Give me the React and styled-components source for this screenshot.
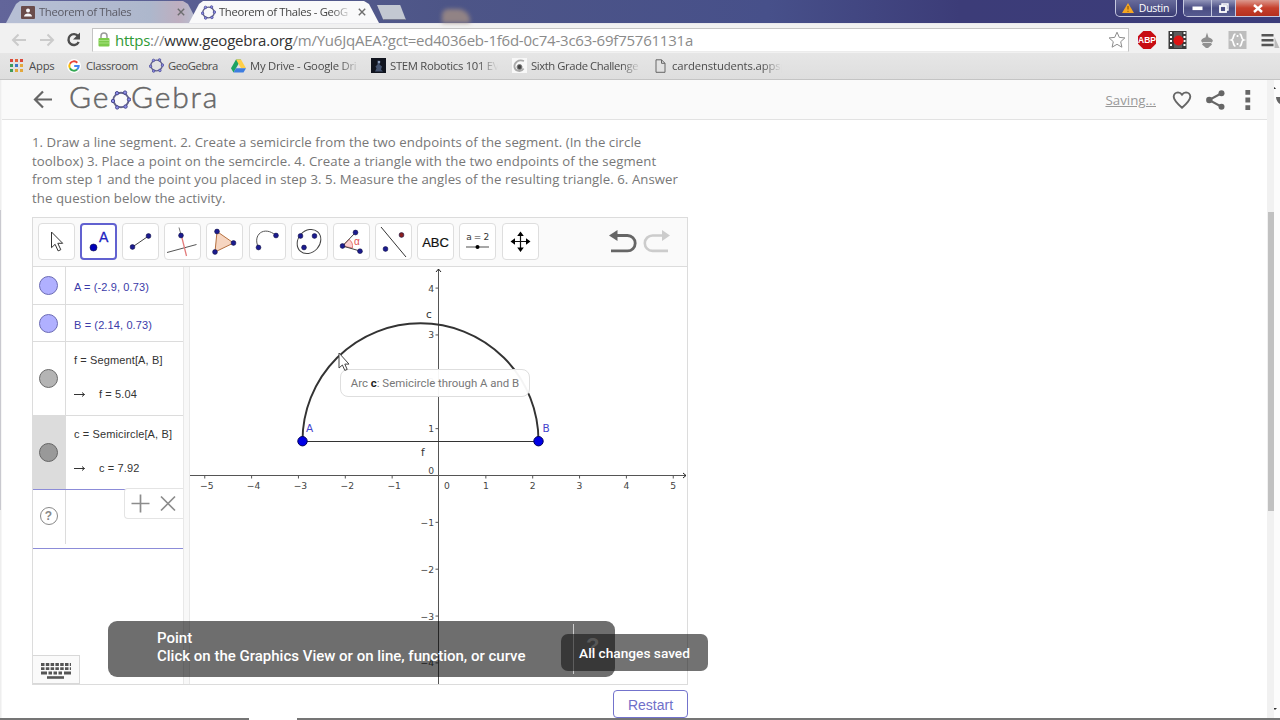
import React from "react";
import styled, { createGlobalStyle } from "styled-components";

const tools = [
  "move",
  "point",
  "segment",
  "perpendicular",
  "polygon",
  "arc",
  "conic",
  "angle",
  "reflect",
  "text",
  "slider",
  "pan",
];

const bookmarks = [
  { icon: "apps", label: "Apps", width: 57, spacing: -0.2 },
  { icon: "google", label: "Classroom", width: 82, spacing: -0.42 },
  { icon: "hexagon", label: "GeoGebra", width: 82, spacing: -0.5 },
  { icon: "drive", label: "My Drive - Google Dri", width: 140, fade: 110, spacing: -0.25 },
  { icon: "stem", label: "STEM Robotics 101 EV", width: 141, fade: 108, spacing: -0.3 },
  { icon: "swirl", label: "Sixth Grade Challenge", width: 141, fade: 110, spacing: -0.42 },
  { icon: "file", label: "cardenstudents.appsp", width: 141, fade: 110, spacing: -0.12 },
];

function App() {
  return (
    <>
      <GlobalStyle />
      <Browser>
        <TabStrip>
          <Tab $width={192} $inactive>
            <TabIcon>
              <SmallIcon name="person" />
            </TabIcon>
            <TabTitle>Theorem of Thales</TabTitle>
            <TabClose />
          </Tab>
          <Tab $width={190} $overlap>
            <TabIcon>
              <SmallIcon name="hexagon" />
            </TabIcon>
            <TabTitle $fade>Theorem of Thales - GeoG</TabTitle>
            <TabClose />
          </Tab>
          <NewTab />
          <Glow />
          <WindowButtons>
            <UserButton>
              <svg width="12" height="10" viewBox="0 0 12 10">
                <path d="M6 0L12 10H0Z" fill="#f5a623" />
                <path d="M6 3v3.5M6 7.8v1" stroke="#7a4b00" />
              </svg>
              Dustin
            </UserButton>
            <WindowGroup>
              <WindowButton $width={28}>
                <svg width="11" height="5">
                  <rect x=".5" y=".5" width="10" height="3.6" fill="#fff" />
                </svg>
              </WindowButton>
              <WindowButton $width={24}>
                <svg width="10" height="10" fill="none" stroke="#fff">
                  <path d="M3 2.5V1h6v6H7.5" strokeWidth="1.4" />
                  <rect x="1" y="3" width="6" height="6" strokeWidth="1.8" />
                </svg>
              </WindowButton>
              <WindowButton $width={44} $danger>
                <svg width="10" height="9">
                  <path d="M1 1l8 7M9 1L1 8" stroke="#fff" strokeWidth="2.4" />
                </svg>
              </WindowButton>
            </WindowGroup>
          </WindowButtons>
        </TabStrip>

        <AddressBar>
          <NavIcons width="80" height="24" viewBox="0 0 80 24" fill="none">
            <path
              d="M15 12H2M7.5 6.5l-5.5 5.5 5.5 5.5M29 12h13M36.5 6.5l5.5 5.5-5.5 5.5"
              stroke="#cbcbcb"
              strokeWidth="2"
            />
            <path
              d="M67.2 8.3A5.4 5.4 0 1 0 67.7 14"
              stroke="#4d4d4d"
              strokeWidth="2.4"
            />
            <path d="M69 4.5v7h-7z" fill="#4d4d4d" />
          </NavIcons>
          <UrlBox>
            <svg width="12" height="15" viewBox="0 0 12 15">
              <path
                d="M3 7V4a3 3 0 0 1 6 0v3"
                fill="none"
                stroke="#9a9a9a"
                strokeWidth="1.5"
              />
              <rect x=".5" y="6" width="11" height="8.5" rx="1" fill="#7ccb4b" />
              <path d="M1 8.5h10M1 11h10" stroke="#a5e07e" />
            </svg>
            <Url>
              <Secure>https</Secure>://<Host>www.geogebra.org</Host>
              /m/Yu6JqAEA?gct=ed4036eb-1f6d-0c74-3c63-69f75761131a
            </Url>
            <svg width="18" height="18" viewBox="0 0 18 18">
              <path
                d="M9 1.2l2.3 5.2 5.6.5-4.2 3.8 1.2 5.5L9 13.3l-4.9 2.9 1.2-5.5L1.1 6.9l5.6-.5z"
                fill="#fff"
                stroke="#8c8c8c"
              />
            </svg>
          </UrlBox>
          <Extensions />
        </AddressBar>

        <BookmarkBar>
          {bookmarks.map((item) => (
            <Bookmark key={item.label} $width={item.width}>
              <BookmarkIcon $narrow={item.icon === "file"}>
                <SmallIcon name={item.icon} />
              </BookmarkIcon>
              <BookmarkLabel $fade={item.fade} $spacing={item.spacing}>
                {item.label}
              </BookmarkLabel>
            </Bookmark>
          ))}
        </BookmarkBar>

        <Viewport>
          <WindowEdge />
          <Page>
            <SiteHeader>
              <svg width="20" height="20" viewBox="0 0 20 20" fill="none">
                <path
                  d="M19 9.5H2.5M10 1.5l-8 8 8 8"
                  stroke="#666"
                  strokeWidth="2.2"
                />
              </svg>
              <Logo>
                <span>Ge</span>
                <HexMark size={20} />
                <span>Gebra</span>
              </Logo>
              <Saving>Saving...</Saving>
              <HeaderIcons />
            </SiteHeader>
            <Content>
              <Instructions>
                <Line $spacing={0.055}>
                  1. Draw a line segment. 2. Create a semicircle from the two
                  endpoints of the segment. (In the circle
                </Line>
                <Line $spacing={0.085}>
                  toolbox) 3. Place a point on the semcircle. 4. Create a
                  triangle with the two endpoints of the segment
                </Line>
                <Line $spacing={0.075}>
                  from step 1 and the point you placed in step 3. 5. Measure the
                  angles of the resulting triangle. 6. Answer
                </Line>
                <Line $spacing={0.07}>the question below the activity.</Line>
              </Instructions>
              <Applet>
                <Toolbar>
                  {tools.map((name) => (
                    <ToolButton key={name} $active={name === "point"}>
                      <ToolIcon name={name} />
                    </ToolButton>
                  ))}
                  <UndoRedo width="64" height="26" viewBox="0 0 64 26" fill="none">
                    <path
                      d="M8 6.5h11.5a7.5 7.5 0 0 1 0 15.4H3"
                      stroke="#666"
                      strokeWidth="2.8"
                    />
                    <path d="M1 6.5L9.5 1v11z" fill="#666" />
                    <path
                      d="M55 6.5H44.5a7.5 7.5 0 0 0 0 15.4H60"
                      stroke="#ccc"
                      strokeWidth="2.6"
                    />
                    <path d="M62 6.5L54 1v11z" fill="#ccc" />
                  </UndoRedo>
                </Toolbar>
                <Views>
                  <Algebra>
                    <AlgebraRow $height={38}>
                      <Marble $fill="#b0b0ff" $line="#6b6bb5" />
                      <Definition $color="#3b3ba8" $single>
                        <Expr>A = (-2.9, 0.73)</Expr>
                      </Definition>
                    </AlgebraRow>
                    <AlgebraRow $height={37}>
                      <Marble $fill="#b0b0ff" $line="#6b6bb5" />
                      <Definition $color="#3b3ba8" $single>
                        <Expr>B = (2.14, 0.73)</Expr>
                      </Definition>
                    </AlgebraRow>
                    <AlgebraRow $height={74}>
                      <Marble $fill="#b4b4b4" $line="#6a6a6a" />
                      <Definition $color="#333">
                        <Expr>f = Segment[A, B]</Expr>
                        <Result>
                          <Arrow />f = 5.04
                        </Result>
                      </Definition>
                    </AlgebraRow>
                    <AlgebraRow $height={74} $focus>
                      <Marble $fill="#999" $line="#666" $selected />
                      <Definition $color="#333">
                        <Expr>c = Semicircle[A, B]</Expr>
                        <Result>
                          <Arrow />c = 7.92
                        </Result>
                      </Definition>
                    </AlgebraRow>
                    <InputRow>
                      <HelpCell>
                        <Help>?</Help>
                      </HelpCell>
                      <InputActions>
                        <svg width="46" height="20" viewBox="0 0 46 20">
                          <path
                            d="M9.5 .5v18M.5 9.5h18M30 2.5l14 14M44 2.5L30 16.5"
                            stroke="#8c8c8c"
                            strokeWidth="1.7"
                          />
                        </svg>
                      </InputActions>
                    </InputRow>
                    <KeyboardButton>
                      <Keyboard />
                    </KeyboardButton>
                  </Algebra>
                  <Splitter />
                  <Graphics />
                </Views>
                <Tooltip>
                  Arc <b>c</b>: Semicircle through A and B
                </Tooltip>
                <Pointer width="12" height="20" viewBox="0 0 12 20">
                  <path
                    d="M1 1v15l3.4-3 2.4 5.4 2.4-1-2.4-5.3H11z"
                    fill="#fff"
                    stroke="#444"
                  />
                </Pointer>
                <Snackbar>
                  <SnackText>
                    <p>Point</p>
                    <p>Click on the Graphics View or on line, function, or curve</p>
                  </SnackText>
                  <SnackHelp>?</SnackHelp>
                </Snackbar>
                <Toast>All changes saved</Toast>
              </Applet>
              <Restart>Restart</Restart>
            </Content>
          </Page>
          <ScrollTrack>
            <ScrollThumb />
          </ScrollTrack>
          <ScrollGutter>
            <svg width="6" height="638" viewBox="0 0 6 638">
              <path d="M-1 9l1.5-2L2 9zM-1 628h4l-2 2z" fill="#333" />
              <path d="M2 17h4v7c-2-1-4-4-4-7z" fill="#666" />
            </svg>
          </ScrollGutter>
        </Viewport>
        <Taskbar>
          <TaskbarGap />
        </Taskbar>
      </Browser>
    </>
  );
}

export default App;

function HexMark({ size }) {
  const dots = [
    [6, 3.2],
    [14, 2.6],
    [18, 9.5],
    [14.5, 16.6],
    [6.2, 17.4],
    [2, 11],
  ];
  return (
    <svg width={size} height={size} viewBox="0 0 20 20">
      <ellipse
        cx="10"
        cy="10"
        rx="7.6"
        ry="7.2"
        fill="none"
        stroke="#62628a"
        strokeWidth="1.9"
      />
      {dots.map(([x, y]) => (
        <circle key={x} cx={x} cy={y} r="1.7" fill="#8f8fe8" stroke="#4a4a90" />
      ))}
    </svg>
  );
}

function SmallIcon({ name }) {
  if (name === "hexagon") return <HexMark size={15} />;
  if (name === "apps") {
    const colors = ["#d9483b", "#e0643c", "#d9483b", "#3f9b5a", "#3d77c9", "#e3a83b", "#3f9b5a", "#e3a83b", "#e3a83b"];
    return (
      <svg width="14" height="14">
        {colors.map((c, i) => (
          <rect
            key={i}
            x={(i % 3) * 5}
            y={Math.floor(i / 3) * 5}
            width="3"
            height="3"
            fill={c}
          />
        ))}
      </svg>
    );
  }
  if (name === "google") {
    return (
      <svg width="14" height="14" viewBox="0 0 14 14" fill="none">
        <circle cx="7" cy="7" r="7" fill="#fff" />
        <g strokeWidth="2">
          <path d="M10.3 3.7A4.7 4.7 0 0 0 2.9 4.7" stroke="#e94235" />
          <path d="M2.9 4.7a4.7 4.7 0 0 0 0 4.6" stroke="#fabb05" />
          <path d="M2.9 9.3a4.7 4.7 0 0 0 7.2 1.2" stroke="#34a853" />
          <path d="M10.1 10.5A4.7 4.7 0 0 0 11.7 7H7.2" stroke="#4285f4" />
        </g>
      </svg>
    );
  }
  if (name === "drive") {
    return (
      <svg width="15" height="14" viewBox="0 0 15 14">
        <path d="M5 .5h5L5 9.2 2.5 13.5 0 9.2z" fill="#1da362" />
        <path d="M5 .5h5l5 8.7h-5z" fill="#ffcf48" />
        <path d="M5 9.2h10l-2.5 4.3h-10z" fill="#3d7de0" />
      </svg>
    );
  }
  if (name === "stem") {
    return (
      <svg width="15" height="15">
        <rect width="15" height="15" fill="#11151f" />
        <path d="M6.5 2.5l3 1-1 3 2.5 2-1 3 2 2H4l1.5-3-1-2 2-2z" fill="#44536f" />
        <circle cx="8" cy="4" r="1.2" fill="#8fa0bd" />
      </svg>
    );
  }
  if (name === "swirl") {
    return (
      <svg width="15" height="15" fill="none">
        <rect width="15" height="15" fill="#f8f8f8" />
        <path d="M12 3C6 1 2 5 2.4 9a5 5 0 0 0 9.2 1.5" stroke="#aaa" strokeWidth="1.8" />
        <circle cx="7.5" cy="9" r="2.5" fill="#444" stroke="#888" />
      </svg>
    );
  }
  if (name === "file") {
    return (
      <svg width="11" height="14" fill="none" stroke="#666">
        <path d="M1 .8h5.5L10 4.3v9H1zM6.5.8v3.5H10" />
      </svg>
    );
  }
  return (
    <svg width="14" height="13">
      <rect width="14" height="13" rx="1" fill="#6b4b47" />
      <circle cx="7" cy="4.6" r="2" fill="#fff" />
      <path d="M3 10.5c0-4 8-4 8 0z" fill="#fff" />
    </svg>
  );
}

function TabClose() {
  return (
    <CloseIcon width="8" height="8" viewBox="0 0 8 8">
      <path d="M.8.8l6.4 6.4M7.2.8L.8 7.2" stroke="#6e6e6e" strokeWidth="1.4" />
    </CloseIcon>
  );
}

function Extensions() {
  return (
    <ExtensionIcons width="149" height="24" viewBox="0 0 149 24">
      <path d="M12.3 3h7.4l5.3 5.3v7.4L19.7 21h-7.4L7 15.7V8.3z" fill="#c70d12" />
      <AbpText x="16" y="15.3">
        ABP
      </AbpText>
      <rect x="37.5" y="3" width="18" height="18" fill="#3a3a3a" />
      <path d="M40 4v16M53.5 4v16" stroke="#fff" strokeWidth="2" strokeDasharray="2 2" />
      <rect x="43" y="4" width="8" height="16" fill="#5b5b5b" />
      <circle cx="47.5" cy="12.5" r="5" fill="#dd1414" />
      <path
        d="M76 4.500l1.500 5h-3zM70 13c1.500-5 10.500-5 12 0l-2 2 1 1.500-4 3.500h-2l-4-3.500 1-1.500z"
        fill="#909090"
      />
      <path d="M72 14.500h8" stroke="#ddd" />
      <rect x="97.5" y="3" width="18" height="18" fill="#bdbdbd" />
      <path
        d="M104.500 6c-3 0-1 5-4 6 3 1 1 6 4 6M108.500 6c3 0 1 5 4 6-3 1-1 6-4 6M106.500 7v2M106.500 15v2"
        stroke="#fff"
        strokeWidth="1.7"
        fill="none"
      />
      <path d="M130.500 7.300h12M130.500 12.200h12M130.500 17h12" stroke="#555" strokeWidth="2.5" />
      <path d="M143.500 9l5 11h-5z" fill="#bbb" />
    </ExtensionIcons>
  );
}

function HeaderIcons() {
  return (
    <svg width="84" height="24" viewBox="0 0 84 24" fill="none">
      <path
        d="M11 19.8C5 14.5 2.7 12 2.7 8.8A4.500 4.500 0 0 1 7 4.400c1.600 0 3 .8 4 2.200 1-1.400 2.400-2.200 4-2.200a4.500 4.500 0 0 1 4.300 4.400c0 3.200-2.300 5.700-8.300 11z"
        stroke="#666"
        strokeWidth="1.9"
      />
      <path d="M51 5L38 12l13 7" stroke="#666" strokeWidth="2" />
      <circle cx="50.5" cy="5.2" r="3" fill="#666" />
      <circle cx="38.3" cy="12" r="3.2" fill="#666" />
      <circle cx="50.5" cy="18.8" r="3" fill="#666" />
      <path d="M74.4 2h4.8v4.8h-4.8zM74.4 9.6h4.8v4.8h-4.8zM74.4 17.2h4.8V22h-4.8z" fill="#666" />
    </svg>
  );
}

function ToolIcon({ name }) {
  const dot = (x, y, r = 2.4, fill = "#1b1b8f") => (
    <circle cx={x} cy={y} r={r} fill={fill} stroke="#111144" strokeWidth=".6" />
  );
  const shapes = {
    move: (
      <path
        d="M13.5 9v15.7l3.6-3.4 3 6.6 2.7-1.2-3-6.4h4.9z"
        fill="#fff"
        stroke="#333"
      />
    ),
    point: (
      <>
        {dot(13.5, 24.5, 3.5, "#0000b8")}
        <BigA x="19" y="19">
          A
        </BigA>
      </>
    ),
    segment: (
      <>
        <path d="M10.5 24L26.5 13" stroke="#444" />
        {dot(10.5, 24)}
        {dot(26.5, 13)}
      </>
    ),
    perpendicular: (
      <>
        <path d="M3 29.5L32.5 21.5" stroke="#555" />
        <path d="M15 4.5l2.5 9" stroke="#777" />
        <path d="M17.5 13l5 20" stroke="#e37c7c" strokeWidth="1.3" />
        {dot(17, 12.5)}
      </>
    ),
    polygon: (
      <>
        <path d="M11 8.5L27.5 20 9 29z" fill="#f6d5c0" stroke="#b5703f" />
        {dot(11, 8.5)}
        {dot(27.5, 20)}
        {dot(9, 29)}
      </>
    ),
    arc: (
      <>
        <path d="M9.5 24.5C3 12 15 2 27 12.5" fill="none" stroke="#555" />
        {dot(9.5, 24.5)}
        {dot(27, 12.5)}
      </>
    ),
    conic: (
      <>
        <ellipse
          cx="18"
          cy="18.5"
          rx="13"
          ry="10.8"
          transform="rotate(-48 18 18.5)"
          fill="none"
          stroke="#444"
        />
        {dot(9.5, 13)}
        {dot(23.5, 13)}
        {dot(13, 24.5)}
      </>
    ),
    angle: (
      <>
        <path d="M9.5 23l6.5-6.6c3 2 4 5 3.4 8.6z" fill="#fbd0d0" stroke="#e27a7a" />
        <path d="M22.5 9.5L9.5 23l17.5 5" fill="none" stroke="#444" />
        {dot(22.5, 9.5)}
        {dot(9.5, 23)}
        {dot(27, 28.2)}
        <Alpha x="21" y="22">
          α
        </Alpha>
      </>
    ),
    reflect: (
      <>
        <path d="M6 4l25 30" stroke="#333" />
        {dot(10.5, 26)}
        {dot(26.5, 12, 2.4, "#8a1f1f")}
      </>
    ),
    text: (
      <AbcText x="18.5" y="23.5">
        ABC
      </AbcText>
    ),
    slider: (
      <>
        <SliderText x="18.5" y="17">
          a = 2
        </SliderText>
        <path d="M7 24h23" stroke="#777" strokeWidth="1.3" />
        <circle cx="18.5" cy="24" r="2" fill="#000" />
      </>
    ),
    pan: (
      <>
        <path d="M18.5 12v14M12 18.5h14" stroke="#111" strokeWidth="1.2" />
        <path
          d="M18.5 8.5l3.3 4.5h-6.6zM18.5 29l3.3-4.5h-6.6zM8.5 18.5l4.5-3.3v6.6zM28.5 18.5l-4.500-3.300v6.600z"
          fill="#000"
        />
      </>
    ),
  };
  return (
    <svg width="37" height="37" viewBox="0 0 37 37">
      {shapes[name]}
    </svg>
  );
}

function Arrow() {
  return (
    <svg width="12" height="7" viewBox="0 0 12 7" fill="none" stroke="#333">
      <path d="M0 3.5h10.5M8 1.5l2.5 2L8 5.5" />
    </svg>
  );
}

function Keyboard() {
  return (
    <svg width="30" height="18" viewBox="0 0 30 18" stroke="#555">
      <path d="M0 2.5h30M0 6.7h30" strokeWidth="2.8" strokeDasharray="3.5 1.3" />
      <path d="M0 11h6M7.5 11h3.5M12.5 11h3.5M17.5 11h3.5M23 11h7" strokeWidth="2.8" />
      <path d="M6 15.5h17" strokeWidth="2.6" />
    </svg>
  );
}

const UNIT = 46.85;
const OX = 249;
const OY = 208.5;

function Graphics() {
  const xs = [-5, -4, -3, -2, -1, 1, 2, 3, 4, 5];
  const ys = [4, 3, 2, 1, -1, -2, -3, -4];
  const format = (n) => String(n).replace("-", "−");
  return (
    <Plane width="497" height="417" viewBox="0 0 497 417">
      <g stroke="#555" fill="none">
        <path d={`M0 ${OY}H496M${OX - 0.5} 2V417`} />
        <path d={`M493 ${OY - 2.5}l3 2.5-3 2.5M${OX - 3} 5l2.5-3 2.5 3`} stroke="#222" />
        {xs.map((n) => (
          <path key={n} d={`M${OX + n * UNIT} ${OY}v3`} />
        ))}
        {ys.map((n) => (
          <path key={n} d={`M${OX - 0.5} ${OY - n * UNIT}h-3`} />
        ))}
      </g>
      {xs.map((n) => (
        <AxisLabel key={n} x={OX + n * UNIT + (n < 0 ? 2 : 0)} y="221.5">
          {format(n)}
        </AxisLabel>
      ))}
      <AxisLabel x="257" y="221.5">
        0
      </AxisLabel>
      {ys.map((n) => (
        <AxisLabel key={n} x="244" y={OY + 3.5 - n * UNIT} $end>
          {format(n)}
        </AxisLabel>
      ))}
      <AxisLabel x="244" y="206.5" $end>
        0
      </AxisLabel>
      <path d="M112.5 174.5h236" stroke="#333" strokeWidth="1.2" />
      <path d="M112.5 174a118 117.7 0 0 1 236 0" fill="none" stroke="#333" strokeWidth="1.9" />
      <circle cx="112.5" cy="174.2" r="4.7" fill="#0000e6" stroke="#00005c" />
      <circle cx="348.5" cy="174.2" r="4.7" fill="#0000e6" stroke="#00005c" />
      <PointLabel x="116" y="165">
        A
      </PointLabel>
      <PointLabel x="352.5" y="165">
        B
      </PointLabel>
      <ShapeLabel x="236" y="51">
        c
      </ShapeLabel>
      <ShapeLabel x="231" y="189">
        f
      </ShapeLabel>
    </Plane>
  );
}

const GlobalStyle = createGlobalStyle`
  * {
    box-sizing: border-box;
  }
  body {
    margin: 0;
    background: #fff;
    font-family: "Open Sans", "Noto Sans", sans-serif;
  }
  p {
    margin: 0;
  }
  svg {
    display: block;
    flex-shrink: 0;
  }
`;

const Browser = styled.div`
  width: 1280px;
  height: 720px;
  display: flex;
  flex-direction: column;
  overflow: hidden;
`;

const TabStrip = styled.header`
  height: 24px;
  display: flex;
  align-items: flex-end;
  padding-left: 6px;
  background: linear-gradient(90deg, #62659a, #4d5587 35%, #47508a 60%, #3c3c78 75%, #3b3c7a);
  border-bottom: 1px solid #e8e8ec;
`;

const Tab = styled.div`
  width: ${(p) => p.$width}px;
  height: 22px;
  display: flex;
  align-items: center;
  padding: 0 13px 0 ${(p) => (p.$overlap ? "12px" : "15px")};
  margin-left: ${(p) => (p.$overlap ? "-9px" : "0")};
  background: ${(p) =>
    p.$inactive ? "linear-gradient(90deg, #bcc5d8, #b3bccf 75%, #c4b3c2 90%, #bcc5d8)" : "#f9f9fa"};
  clip-path: polygon(0 100%, 10px 3px, 14px 0, calc(100% - 15px) 0, calc(100% - 10px) 3px, 100% 100%);
  opacity: ${(p) => (p.$inactive ? 0.95 : 1)};
`;

const TabIcon = styled.span`
  width: 15px;
  margin-right: 3px;
`;

const TabTitle = styled.span`
  flex: 1;
  min-width: 0;
  overflow: hidden;
  white-space: nowrap;
  font-size: 11.3px;
  line-height: 16px;
  letter-spacing: -0.35px;
  color: ${(p) => (p.$fade ? "#444" : "#5a5a62")};
  mask-image: ${(p) =>
    p.$fade ? "linear-gradient(90deg, #000 112px, transparent 133px)" : "none"};
`;

const CloseIcon = styled.svg`
  margin-left: 8px;
`;

const NewTab = styled.div`
  width: 29px;
  height: 15px;
  margin: 0 0 3px -2px;
  background: #c3c8d2;
  border-bottom: 1px solid #777a90;
  clip-path: polygon(0 0, 80% 0, 100% 100%, 22% 100%);
`;

const Glow = styled.div`
  width: 28px;
  height: 14px;
  margin-left: 36px;
  border-radius: 6px 12px 0 0;
  background: #a38f85;
  filter: blur(2px);
  opacity: 0.8;
`;

const WindowButtons = styled.div`
  display: flex;
  align-self: flex-start;
  gap: 6px;
  margin-left: auto;
`;

const UserButton = styled.div`
  width: 62px;
  height: 17px;
  display: flex;
  align-items: center;
  justify-content: center;
  gap: 5px;
  padding: 0 1px 1px 0;
  border: 1px solid #c6c9e0;
  border-top: 0;
  border-radius: 0 0 5px 5px;
  background: linear-gradient(#686b9b, #3a3c74);
  color: #fff;
  font-size: 10.5px;
  line-height: 14px;
  letter-spacing: -0.25px;
`;

const WindowGroup = styled.div`
  display: flex;
  height: 17px;
  overflow: hidden;
  border: 1px solid #c6c9e0;
  border-top: 0;
  border-right: 0;
  border-radius: 0 0 0 5px;
`;

const WindowButton = styled.div`
  width: ${(p) => p.$width}px;
  display: flex;
  align-items: center;
  justify-content: center;
  border-right: 1px solid #c6c9e0;
  background: ${(p) =>
    p.$danger
      ? "linear-gradient(#dc9a8f, #c6402c 50%, #b5301f)"
      : "linear-gradient(#9295ba, #4a4d83 50%, #565a90)"};
`;

const AddressBar = styled.div`
  height: 29px;
  display: flex;
  align-items: center;
  padding: 3px 0 0 11px;
  background: #f1f1f1;
`;

const NavIcons = styled.svg`
  margin-right: 1px;
`;

const UrlBox = styled.div`
  width: 1038px;
  height: 24px;
  display: flex;
  align-items: center;
  padding: 0 2px 1px 5px;
  background: #fff;
  border: 1px solid #c4c4c4;
  border-bottom-color: #ececec;
`;

const Url = styled.span`
  flex: 1;
  margin-left: 5px;
  white-space: nowrap;
  font-size: 15px;
  line-height: 20px;
  letter-spacing: -0.23px;
  color: #8b8b8b;
`;

const Secure = styled.span`
  color: #2f9a35;
`;

const Host = styled.span`
  color: #333;
`;

const ExtensionIcons = styled.svg`
  margin-left: 2px;
`;

const AbpText = styled.text`
  font: bold 8.5px "Liberation Sans", sans-serif;
  fill: #fff;
  text-anchor: middle;
`;

const BookmarkBar = styled.nav`
  height: 27px;
  display: flex;
  align-items: center;
  padding: 0 0 1px 10px;
  background: linear-gradient(#e6e6e6, #dedede);
  border-bottom: 1px solid #c4c4c4;
`;

const Bookmark = styled.div`
  width: ${(p) => p.$width}px;
  display: flex;
  align-items: center;
  gap: 4px;
`;

const BookmarkIcon = styled.span`
  width: 15px;
  padding-left: ${(p) => (p.$narrow ? "2px" : "0")};
`;

const BookmarkLabel = styled.span`
  width: ${(p) => (p.$fade ? `${p.$fade}px` : "auto")};
  overflow: hidden;
  white-space: nowrap;
  font-size: 11.3px;
  line-height: 16px;
  letter-spacing: ${(p) => p.$spacing}px;
  color: #4c4c4c;
  mask-image: ${(p) =>
    p.$fade ? "linear-gradient(90deg, #000 82%, transparent)" : "none"};
`;

const Viewport = styled.div`
  height: 638px;
  display: flex;
`;

const WindowEdge = styled.div`
  width: 2px;
  background: linear-gradient(#eee 0 130px, #c9c9cf 130px 430px, #eee 430px);
  border-right: 1px solid #f6f6f6;
`;

const Page = styled.main`
  flex: 1;
  display: flex;
  flex-direction: column;
  background: #fff;
`;

const SiteHeader = styled.div`
  height: 40px;
  display: flex;
  align-items: center;
  padding: 0 12px 0 31px;
  background: #fafafa;
  border-bottom: 1px solid #e2e2e2;
`;

const Logo = styled.div`
  display: flex;
  align-items: center;
  margin: -7px 0 0 16px;
  font: 300 30px/34px Lato, sans-serif;
  letter-spacing: 1.8px;
  color: #666;
  -webkit-text-stroke: 0.5px #666;

  svg {
    margin: 7px 0 0 1px;
  }
`;

const Saving = styled.span`
  margin: 0 15px 0 auto;
  font-size: 13.3px;
  line-height: 18px;
  color: #999;
  text-decoration: underline;
`;

const Content = styled.section`
  width: 656px;
  display: flex;
  flex-direction: column;
  margin-left: 30px;
`;

const Instructions = styled.div`
  padding-top: 13px;
  height: 97px;
`;

const Line = styled.p`
  white-space: nowrap;
  font-size: 13.2px;
  line-height: 18.7px;
  letter-spacing: ${(p) => p.$spacing}px;
  color: #777;
`;

const Applet = styled.div`
  position: relative;
  height: 468px;
  border: 1px solid #dcdcdc;
`;

const Toolbar = styled.div`
  height: 49px;
  display: flex;
  align-items: center;
  gap: 5.2px;
  padding: 0 0 1px 4.6px;
  background: #fafafa;
  border-bottom: 1px solid #dcdcdc;
`;

const ToolButton = styled.div`
  width: 37px;
  height: 37px;
  display: flex;
  align-items: center;
  justify-content: center;
  background: #fff;
  border: ${(p) => (p.$active ? "2px solid #6161d0" : "1px solid #dedede")};
  border-radius: 4px;
`;

const UndoRedo = styled.svg`
  margin-left: 64.5px;
`;

const BigA = styled.text`
  font: 14px "Liberation Sans", sans-serif;
  fill: #2020c0;
  stroke: #2020c0;
  stroke-width: 0.3px;
`;

const Alpha = styled.text`
  font: 10px "Liberation Sans", sans-serif;
  fill: #e05050;
`;

const AbcText = styled.text`
  font: 13px "Liberation Sans", sans-serif;
  fill: #111;
  stroke: #111;
  stroke-width: 0.2px;
  text-anchor: middle;
`;

const SliderText = styled.text`
  font: 9px "DejaVu Sans", sans-serif;
  letter-spacing: -0.4px;
  fill: #333;
  text-anchor: middle;
`;

const Views = styled.div`
  height: 417px;
  display: flex;
`;

const Algebra = styled.div`
  width: 150px;
  display: flex;
  flex-direction: column;
`;

const AlgebraRow = styled.div`
  height: ${(p) => p.$height}px;
  display: flex;
  border-bottom: 1px solid ${(p) => (p.$focus ? "#8c8cd8" : "#dcdcdc")};
`;

const MarbleCell = styled.div`
  width: 33px;
  display: flex;
  align-items: center;
  justify-content: center;
  padding-right: 1px;
  background: ${(p) => (p.$selected ? "#dcdcdc" : "#fff")};
  border-right: 1px solid #dcdcdc;
`;

const MarbleDot = styled.span`
  width: 19px;
  height: 19px;
  border-radius: 50%;
  background: ${(p) => p.$fill};
  border: 1.5px solid ${(p) => p.$line};
`;

function Marble({ $fill, $line, $selected }) {
  return (
    <MarbleCell $selected={$selected}>
      <MarbleDot $fill={$fill} $line={$line} />
    </MarbleCell>
  );
}

const Definition = styled.div`
  flex: 1;
  display: flex;
  flex-direction: column;
  justify-content: ${(p) => (p.$single ? "center" : "flex-start")};
  gap: 18px;
  padding: ${(p) => (p.$single ? "3px 0 0 8px" : "10px 0 0 8px")};
  font: 11px/16px "Liberation Sans", sans-serif;
  white-space: nowrap;
  color: ${(p) => p.$color};
`;

const Expr = styled.span`
  letter-spacing: 0.12px;
`;

const Result = styled.span`
  display: flex;
  align-items: center;
  gap: 13px;
  letter-spacing: 0.12px;
`;

const InputRow = styled.div`
  height: 59px;
  display: flex;
  border-bottom: 1px solid #8c8cd8;
`;

const HelpCell = styled.div`
  width: 33px;
  height: 54px;
  display: flex;
  align-items: center;
  justify-content: center;
  padding: 0 1px 2px 0;
  border-right: 1px solid #dcdcdc;
`;

const Help = styled.span`
  width: 18px;
  height: 18px;
  border: 1.5px solid #888;
  border-radius: 50%;
  font: bold 12px/16px "Liberation Sans", sans-serif;
  text-align: center;
  color: #888;
`;

const InputActions = styled.div`
  width: 59px;
  height: 31px;
  display: flex;
  align-items: center;
  margin: -2px 0 0 auto;
  padding-left: 6px;
  background: #fff;
  border: 1px solid #e4e4e4;
  border-width: 1px 0 1px 1px;
  border-radius: 4px 0 0 4px;
`;

const KeyboardButton = styled.div`
  width: 47px;
  height: 29px;
  display: flex;
  align-items: center;
  justify-content: center;
  margin-top: auto;
  padding-top: 2px;
  background: #fafafa;
  border: 1px solid #d8d8d8;
  border-left: 0;
`;

const Splitter = styled.div`
  width: 7px;
  background: #f8f8f8;
  border: 1px solid #e8e8e8;
  border-width: 0 1px;
`;

const Plane = styled.svg`
  background: #fff;
`;

const AxisLabel = styled.text`
  font: 9.2px "DejaVu Sans", sans-serif;
  fill: #444;
  text-anchor: ${(p) => (p.$end ? "end" : "middle")};
`;

const PointLabel = styled.text`
  font: 10.5px "DejaVu Sans", sans-serif;
  fill: #4444cc;
`;

const ShapeLabel = styled.text`
  font: 10.5px "DejaVu Sans", sans-serif;
  fill: #333;
`;

const Tooltip = styled.div`
  position: absolute;
  left: 307px;
  top: 151px;
  width: 190px;
  height: 28px;
  border: 1px solid #dedede;
  border-radius: 8px;
  background: rgba(255, 255, 255, 0.95);
  font: 11.4px/26px Roboto, sans-serif;
  text-align: center;
  white-space: nowrap;
  color: #777;

  b {
    color: #222;
  }
`;

const Pointer = styled.svg`
  position: absolute;
  left: 305px;
  top: 134px;
`;

const Snackbar = styled.div`
  position: absolute;
  left: 75px;
  top: 403px;
  width: 507px;
  height: 56px;
  display: flex;
  align-items: center;
  padding-left: 49px;
  border-radius: 9px;
  background: rgba(0, 0, 0, 0.57);
`;

const SnackText = styled.div`
  width: 417px;
  height: 50px;
  padding-top: 5px;
  border-right: 1px solid #ccc;
  font: 500 15px/18px Roboto, sans-serif;
  white-space: nowrap;
  color: #fff;
`;

const SnackHelp = styled.span`
  margin: 0 0 6px 12px;
  font: bold 22px/26px "Liberation Sans", sans-serif;
  color: #bbb;
`;

const Toast = styled.div`
  position: absolute;
  left: 528px;
  top: 416px;
  width: 147px;
  height: 37px;
  border-radius: 7px;
  background: rgba(20, 20, 20, 0.6);
  font: 500 13.7px/38px Roboto, sans-serif;
  text-align: center;
  white-space: nowrap;
  color: #fff;
`;

const Restart = styled.div`
  width: 75px;
  height: 28px;
  margin: 5px 0 0 auto;
  border: 1px solid #7373cc;
  border-radius: 4px;
  font: 14px/28px "Liberation Sans", sans-serif;
  text-align: center;
  color: #6f6fc9;
`;

const ScrollTrack = styled.div`
  width: 7px;
  padding: 132px 0 0 1px;
  background: #f1f1f1;
`;

const ScrollThumb = styled.div`
  height: 299px;
  background: #c1c1c1;
`;

const ScrollGutter = styled.div`
  width: 6px;
  background: #fcfcfc;
`;

const Taskbar = styled.footer`
  height: 2px;
  background: #757575;
`;

const TaskbarGap = styled.div`
  width: 48px;
  height: 2px;
  margin-left: 249px;
  background: #fff;
`;
